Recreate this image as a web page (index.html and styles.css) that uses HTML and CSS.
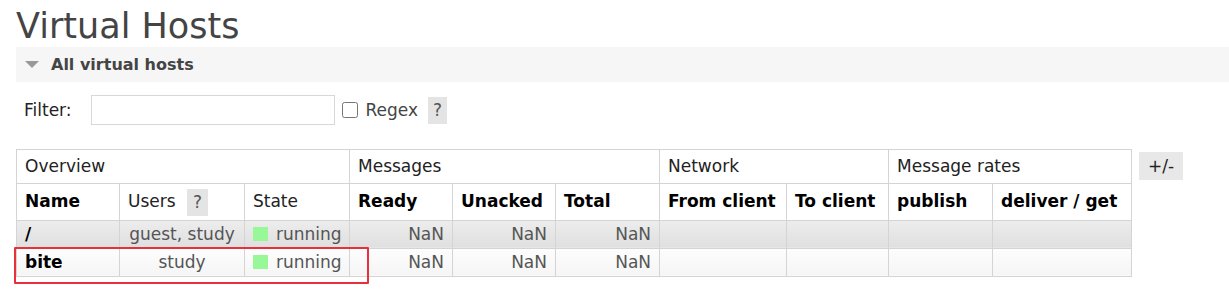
FILE: index.html
```html
<!DOCTYPE html>
<html lang="en">
<head>
    <meta charset="UTF-8">
    <title>Virtual Hosts</title>
    <link rel="stylesheet" href="styles.css">
</head>
<body>
    <div class="page">
        <h1>Virtual Hosts</h1>

        <div class="section-bar">
            <span class="toggle"></span>
            <h2>All virtual hosts</h2>
        </div>

        <div class="filter-row">
            <label for="filter">Filter:</label>
            <input type="text" id="filter">
            <label class="regex"><input type="checkbox"> Regex</label>
            <span class="help">?</span>
        </div>

        <div class="table-row">
            <div class="table-wrap">
                <table class="list">
                    <colgroup>
                        <col style="width:103px">
                        <col style="width:125px">
                        <col style="width:105px">
                        <col style="width:103px">
                        <col style="width:103px">
                        <col style="width:104px">
                        <col style="width:127px">
                        <col style="width:102px">
                        <col style="width:104px">
                        <col style="width:139px">
                    </colgroup>
                    <thead>
                        <tr class="group">
                            <th colspan="3">Overview</th>
                            <th colspan="3">Messages</th>
                            <th colspan="2">Network</th>
                            <th colspan="2">Message rates</th>
                        </tr>
                        <tr class="cols">
                            <th class="b">Name</th>
                            <th>Users <span class="help">?</span></th>
                            <th>State</th>
                            <th class="b">Ready</th>
                            <th class="b">Unacked</th>
                            <th class="b">Total</th>
                            <th class="b">From client</th>
                            <th class="b">To client</th>
                            <th class="b">publish</th>
                            <th class="b">deliver / get</th>
                        </tr>
                    </thead>
                    <tbody>
                        <tr class="alt1">
                            <td class="name">/</td>
                            <td class="c">guest, study</td>
                            <td><span class="state"></span>running</td>
                            <td class="r">NaN</td>
                            <td class="r">NaN</td>
                            <td class="r">NaN</td>
                            <td></td>
                            <td></td>
                            <td></td>
                            <td></td>
                        </tr>
                        <tr class="alt2">
                            <td class="name">bite</td>
                            <td class="c">study</td>
                            <td><span class="state"></span>running</td>
                            <td class="r">NaN</td>
                            <td class="r">NaN</td>
                            <td class="r">NaN</td>
                            <td></td>
                            <td></td>
                            <td></td>
                            <td></td>
                        </tr>
                    </tbody>
                </table>
                <div class="highlight"></div>
            </div>
            <span class="plus-minus">+/-</span>
        </div>

        <div class="next-bar"></div>
    </div>
</body>
</html>
```

FILE: styles.css
```css
body {
    margin: 0;
    padding: 0;
    font-family: "DejaVu Sans", Verdana, sans-serif;
    color: #333;
    background: #fff;
}

.page {
    padding-left: 16px;
}

h1 {
    margin: 6px 0 0 0;
    font-size: 35px;
    font-weight: normal;
    color: #444;
    line-height: 41px;
}

.section-bar {
    display: flex;
    align-items: center;
    height: 35px;
    background-color: #f6f6f6;
}

.toggle {
    width: 0;
    height: 0;
    margin-left: 9px;
    margin-right: 12px;
    border-left: 7px solid transparent;
    border-right: 7px solid transparent;
    border-top: 7px solid #999;
}

.section-bar h2 {
    margin: 0;
    font-size: 16px;
    font-weight: bold;
    color: #444;
}

.filter-row {
    display: flex;
    align-items: center;
    margin-top: 13px;
    height: 30px;
    font-size: 17px;
}

.filter-row label {
    margin-left: 8px;
    color: #222;
}

#filter {
    width: 244px;
    height: 30px;
    box-sizing: border-box;
    margin: 0 0 0 19px;
    border: 1px solid #d8d8d8;
    padding: 2px 4px;
}

.filter-row .regex {
    display: flex;
    align-items: center;
    margin-left: 7px;
    color: #444;
}

.regex input {
    width: 16px;
    height: 16px;
    margin: 0 8px 0 0;
}

.help {
    display: inline-block;
    background-color: #e4e4e4;
    color: #555;
    padding: 0 5px;
    line-height: 27px;
    font-size: 17px;
    font-weight: normal;
}

.filter-row .help {
    margin-left: 10px;
}

.table-row {
    display: flex;
    align-items: flex-start;
    margin-top: 24px;
}

.table-wrap {
    position: relative;
}

table.list {
    border-collapse: collapse;
    table-layout: fixed;
    width: 1115px;
    font-size: 17px;
}

table.list th,
table.list td {
    border: 1px solid #d4d4d4;
    text-align: left;
    white-space: nowrap;
    overflow: hidden;
}

table.list th {
    font-weight: normal;
    color: #222;
    padding: 7px 8px;
    line-height: 19px;
}

table.list tr.cols th {
    padding: 8px 8px 8px 8px;
}

table.list tr.cols .help {
    margin-left: 6px;
    padding: 0 6px;
    line-height: 27px;
    vertical-align: middle;
    margin-top: -4px;
    margin-bottom: -4px;
}

table.list th.b {
    font-weight: bold;
    color: #000;
}

table.list td {
    padding: 4px 8px;
    line-height: 19px;
    color: #555;
}

table.list td.name {
    font-weight: bold;
    color: #000;
}

table.list td.c {
    text-align: center;
}

table.list td.r {
    text-align: right;
}

tr.alt1 td {
    background: linear-gradient(#ededed, #dfdfdf);
}

tr.alt2 td {
    background: linear-gradient(#fdfdfd, #f5f5f5);
}

.state {
    display: inline-block;
    width: 15px;
    height: 14px;
    background-color: #98f898;
    margin-right: 8px;
    vertical-align: -1px;
}

.highlight {
    position: absolute;
    left: -2px;
    top: 98px;
    width: 351px;
    height: 33px;
    border: 2px solid #e8303c;
    border-radius: 1px;
}

.plus-minus {
    margin-left: 7px;
    margin-top: 3px;
    padding: 0 9px;
    line-height: 28px;
    background-color: #e8e8e8;
    font-size: 17px;
    color: #222;
}

.next-bar {
    margin-top: 27px;
    height: 2px;
    background-color: #f6f6f6;
}
```
